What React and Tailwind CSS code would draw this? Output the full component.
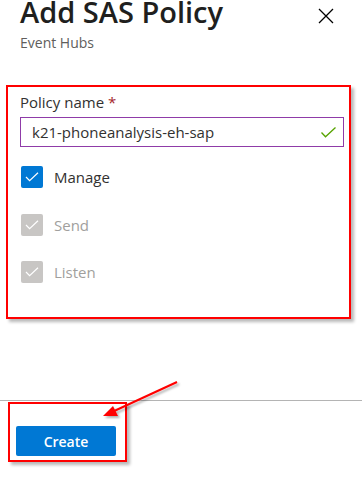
export default function App() {
  const perms = [
    { name: "Manage", enabled: true },
    { name: "Send", enabled: false },
    { name: "Listen", enabled: false },
  ];

  return (
    <div className="relative h-[485px] w-[362px] overflow-hidden bg-white font-['Open_Sans',sans-serif] text-[#323130]">
      {/* header */}
      <div className="flex items-start justify-between pl-[20px] pr-[28px]">
        <div>
          <h1 className="text-[29px] leading-[24px] font-semibold text-[#201f1e]">Add SAS Policy</h1>
          <p className="mt-[9px] text-[14px] leading-[20px] text-[#605e5c]">Event Hubs</p>
        </div>
        <button type="button" className="mt-[8px] text-black" aria-label="Close">
          <svg width="16" height="16" viewBox="0 0 16 16" fill="none" stroke="currentColor" strokeWidth="1.3">
            <path d="M1 1L15 15M15 1L1 15" />
          </svg>
        </button>
      </div>

      {/* form, boxed in red */}
      <div className="mt-[32px] ml-[6px] h-[234px] w-[345px] border-2 border-[#ff0000] pt-[5px] pl-[12px] shadow-[3px_3px_3px_rgba(0,0,0,0.28)]">
        <label className="block text-[15px] leading-[20px] text-[#323130]">
          Policy name <span className="text-[#a4262c]">*</span>
        </label>
        <div className="mt-[5px] flex h-[30px] w-[324px] items-center justify-between border border-[#8f3ba8] pr-[7px] pl-[11px]">
          <span className="text-[15px] leading-none text-[#323130]">k21-phoneanalysis-eh-sap</span>
          <svg width="15" height="11" viewBox="0 0 15 11" fill="none" stroke="#57a300" strokeWidth="1.3">
            <path d="M0.5 5.5L4.5 9.8L14.5 0.5" />
          </svg>
        </div>

        <div className="mt-[19px] flex flex-col gap-[25px] pl-[1px]">
          {perms.map((p) => (
            <div key={p.name} className="flex items-center gap-[11px]">
              <span
                className={
                  p.enabled
                    ? "flex h-[22px] w-[22px] items-center justify-center rounded-[2px] bg-[#0078d4]"
                    : "flex h-[22px] w-[22px] items-center justify-center rounded-[2px] bg-[#c8c6c4]"
                }
              >
                <svg width="14" height="10" viewBox="0 0 14 10" fill="none" stroke="white" strokeWidth="1.2">
                  <path d="M1 5L4.6 8.6L13 0.8" />
                </svg>
              </span>
              <span className={p.enabled ? "text-[15px] text-[#323130]" : "text-[15px] text-[#a19f9d]"}>{p.name}</span>
            </div>
          ))}
        </div>
      </div>

      {/* footer */}
      <div className="mt-[81px] border-t border-[#b4b4b4] pt-[1px]">
        <div className="ml-[8px] h-[60px] w-[119px] border-2 border-[#ff0000] pt-[22px] pl-[6px] shadow-[3px_3px_3px_rgba(0,0,0,0.28)]">
          <button
            type="button"
            className="h-[30px] w-[100px] rounded-[2px] bg-[#0078d4] text-[14px] font-semibold text-white"
          >
            Create
          </button>
        </div>
      </div>

      {/* annotation arrow */}
      <svg className="pointer-events-none absolute top-0 left-0" width="362" height="485">
        <defs>
          <filter id="sh" x="-20%" y="-20%" width="140%" height="140%">
            <feDropShadow dx="2" dy="2" stdDeviation="1.2" floodColor="#000" floodOpacity="0.3" />
          </filter>
        </defs>
        <g filter="url(#sh)">
          <line x1="177" y1="382" x2="112" y2="412" stroke="#ff0000" strokeWidth="2" />
          <polygon points="103,416 113,406 118,416" fill="#ff0000" />
        </g>
      </svg>
    </div>
  );
}
